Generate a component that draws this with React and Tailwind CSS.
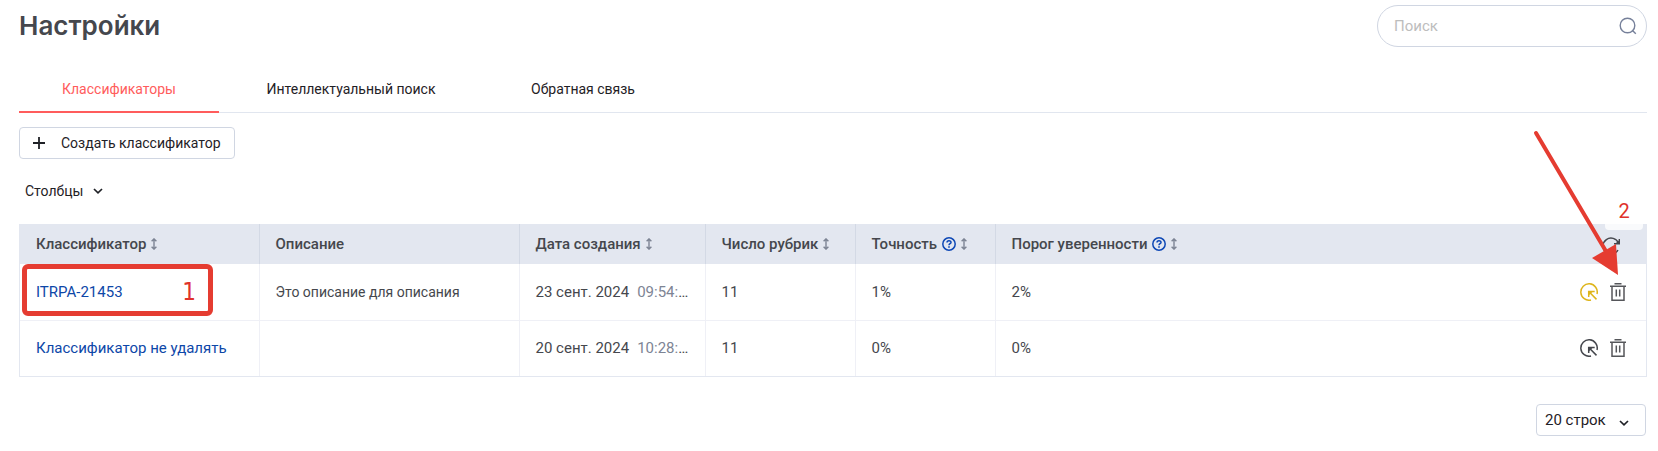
import React, { useState } from 'react';

const TABS = [
    { title: 'Классификаторы', width: 'w-[200px]' },
    { title: 'Интеллектуальный поиск', width: 'w-[264px]' },
    { title: 'Обратная связь', width: 'w-[200px]' },
];

const COLUMNS = [
    { title: 'Классификатор', width: 'w-[239px]', sortable: true },
    { title: 'Описание', width: 'w-[260px]' },
    { title: 'Дата создания', width: 'w-[186px]', sortable: true },
    { title: 'Число рубрик', width: 'w-[150px]', sortable: true },
    { title: 'Точность', width: 'w-[140px]', sortable: true, help: true },
    { title: 'Порог уверенности', width: 'w-auto', sortable: true, help: true, last: true },
];

const ROWS = [
    {
        name: 'ITRPA-21453',
        description: 'Это описание для описания',
        date: '23 сент. 2024',
        time: '09:54:',
        rubrics: 11,
        accuracy: '1%',
        threshold: '2%',
        active: true,
        mark: '1',
    },
    {
        name: 'Классификатор не удалять',
        description: '',
        date: '20 сент. 2024',
        time: '10:28:',
        rubrics: 11,
        accuracy: '0%',
        threshold: '0%',
        active: false,
    },
];

function SortIcon() {
    return (
        <svg width="6" height="12" viewBox="0 0 6 12" fill="none" stroke="#7d8494" aria-hidden="true">
            <path d="M3 1v10M.6 3.2 3 .9l2.4 2.3M.6 8.8 3 11.1l2.4-2.3" strokeWidth="1.4" />
        </svg>
    );
}

function HelpIcon() {
    return (
        <svg width="14" height="14" viewBox="0 0 14 14" fill="none" stroke="#0d47b5" aria-hidden="true">
            <circle cx="7" cy="7" r="6.2" strokeWidth="1.5" />
            <path d="M5 5.6c0-2.4 4-2.4 4-.2C9 6.8 7 6.7 7 8.2" strokeWidth="1.5" />
            <path d="M7 9.3v1.5" strokeWidth="1.6" />
        </svg>
    );
}

function SearchIcon() {
    return (
        <svg width="18" height="18" viewBox="0 0 18 18" fill="none" stroke="#76809a" strokeWidth="1.4" aria-hidden="true">
            <circle cx="8.5" cy="8.5" r="7.3" />
            <path d="m13.2 13.2 3.6 3.6" />
        </svg>
    );
}

function ChevronIcon() {
    return (
        <svg width="10" height="6" viewBox="0 0 10 6" fill="none" stroke="#1f2126" strokeWidth="1.7" aria-hidden="true">
            <path d="m1 1 4 3.8L9 1" />
        </svg>
    );
}

function PlusIcon() {
    return (
        <svg width="12" height="12" viewBox="0 0 12 12" stroke="#1f2126" strokeWidth="1.8" aria-hidden="true">
            <path d="M6 0v12M0 6h12" />
        </svg>
    );
}

function RefreshIcon() {
    return (
        <svg width="18" height="18" viewBox="0 0 18 18" fill="none" stroke="#45474d" strokeWidth="1.4" aria-hidden="true">
            <path d="M16.4 6A8 8 0 1 0 16 13" />
            <path d="M17.3 2v4.8H12" />
            <path d="m13 6.8 4.3-3.5v3.5z" fill="#45474d" stroke="none" />
        </svg>
    );
}

function TargetIcon() {
    return (
        <svg width="18" height="18" viewBox="0 0 18 18" fill="none" stroke="currentColor" strokeWidth="1.5" aria-hidden="true">
            <path d="M11 17A8.2 8.2 0 1 1 17 11" />
            <path d="m9 8.8 7.5 7.6M8.7 14V8.6h6" />
            <path d="M8.7 8.6H13l-4.3 4z" fill="currentColor" stroke="none" />
        </svg>
    );
}

function TrashIcon() {
    return (
        <svg width="16" height="18" viewBox="0 0 16 18" fill="none" stroke="#55565a" strokeWidth="1.5" aria-hidden="true">
            <path d="M0 3.3h16M4.5.8h7M2 3.3v13.9h12V3.3M6.3 6.5v7M9.7 6.5v7" />
        </svg>
    );
}

function HeaderCell({ column }) {
    return (
        <th className={`${column.width} ${column.last ? '' : 'border-r'} h-10 border-[#d3d9e5] px-4 text-left text-[15px] font-medium`}>
            <div className="flex items-center gap-[5px] whitespace-nowrap">
                <span>{column.title}</span>
                {column.help && <HelpIcon />}
                {column.sortable && <SortIcon />}
            </div>
        </th>
    );
}

function Row({ row }) {
    return (
        <tr className="h-14 border-b border-[#eff0f6] text-[15px] last:border-b-0">
            <td className="relative border-r border-[#eff0f6] px-4">
                <a href="#classifier" className="whitespace-nowrap text-[#0d47a8]">{row.name}</a>
                {row.mark && (
                    <div className="pointer-events-none absolute top-0 left-[2px] flex h-[52px] w-[191px] items-center justify-end rounded-md border-[5px] border-[#e53c31] pt-1 pr-3 font-['DejaVu_Sans_Condensed','DejaVu_Sans',sans-serif] text-2xl text-[#e0322b]">
                        {row.mark}
                    </div>
                )}
            </td>
            <td className="border-r border-[#eff0f6] px-4 text-sm">{row.description}</td>
            <td className="border-r border-[#eff0f6] px-4 whitespace-nowrap">
                {row.date}
                <span className="ml-2 text-[#7d8494]">{row.time}</span>…
            </td>
            <td className="border-r border-[#eff0f6] px-4">{row.rubrics}</td>
            <td className="border-r border-[#eff0f6] px-4">{row.accuracy}</td>
            <td className="px-4">{row.threshold}</td>
            <td className="pr-5">
                <div className="flex items-center justify-end gap-3">
                    <button type="button" aria-label="Обучить" className={row.active ? 'text-[#deb51c]' : 'text-[#45474d]'}>
                        <TargetIcon />
                    </button>
                    <button type="button" aria-label="Удалить">
                        <TrashIcon />
                    </button>
                </div>
            </td>
        </tr>
    );
}

export default function App() {
    const [tab, setTab] = useState(0);

    return (
        <main className="bg-white pt-[5px] pr-[11px] pb-4 pl-[19px] font-['Roboto',sans-serif] text-sm leading-5 text-[#45474d]">
            <header className="flex items-center justify-between">
                <h1 className="font-['Inter',sans-serif] text-[26px] font-semibold">Настройки</h1>
                <label className="flex h-[42px] w-[270px] items-center rounded-full border border-[#d0d6e2] pr-[9px] pl-4">
                    <input type="text" aria-label="Поиск" placeholder="Поиск" className="min-w-0 flex-1 text-[15px] outline-none placeholder:text-[#bdbdbd]" />
                    <SearchIcon />
                </label>
            </header>

            <nav className="mt-5 flex border-b border-[#e1e6ef]">
                {TABS.map((item, i) => (
                    <button
                        key={item.title}
                        type="button"
                        onClick={() => setTab(i)}
                        className={`${item.width} -mb-px h-[46px] border-b-2 ${i === tab ? 'border-[#ff5c5c] text-[#ff5c5c]' : 'border-transparent text-[#1f2126]'}`}
                    >
                        {item.title}
                    </button>
                ))}
            </nav>

            <button type="button" className="mt-[14px] flex h-8 items-center gap-4 rounded border border-[#d0d6e2] px-[13px] text-[#1f2126]">
                <PlusIcon />
                Создать классификатор
            </button>

            <button type="button" className="mt-[22px] ml-[6px] flex items-center gap-[10px] text-[#1f2126]">
                Столбцы
                <ChevronIcon />
            </button>

            <section className="relative mt-[23px]">
                <div className="border border-t-0 border-[#e3e7f0]">
                    <table className="w-full table-fixed border-collapse">
                        <thead className="bg-[#e3e7f0]">
                            <tr>
                                {COLUMNS.map((column) => (
                                    <HeaderCell key={column.title} column={column} />
                                ))}
                                <th className="w-[100px] pr-[26px]">
                                    <button type="button" aria-label="Обновить" className="ml-auto block pt-1">
                                        <RefreshIcon />
                                    </button>
                                </th>
                            </tr>
                        </thead>
                        <tbody>
                            {ROWS.map((row) => (
                                <Row key={row.name} row={row} />
                            ))}
                        </tbody>
                    </table>
                </div>

                {/* Подсказка: второй шаг и стрелка к корзине */}
                <div className="pointer-events-none absolute -top-8 right-1 flex h-[38px] w-[38px] items-center justify-center rounded bg-white/80 text-xl text-[#e0322b]">
                    2
                </div>
                <svg width="90" height="148" viewBox="0 0 90 148" className="pointer-events-none absolute -top-24 right-[25px]" aria-hidden="true">
                    <path d="M4 5 75 125" stroke="#e53c31" strokeWidth="4" strokeLinecap="round" />
                    <path d="m86 147-26-17 24-14z" fill="#e53c31" />
                </svg>
            </section>

            <footer className="mt-[27px] flex justify-end pr-px">
                <div className="relative">
                    <select aria-label="Строк на странице" className="h-8 w-[110px] appearance-none rounded border border-[#d0d6e2] bg-white pl-2 text-[15px] text-[#1f2126]">
                        <option>20 строк</option>
                        <option>50 строк</option>
                    </select>
                    <span className="pointer-events-none absolute right-[17px] bottom-[10px]">
                        <ChevronIcon />
                    </span>
                </div>
            </footer>
        </main>
    );
}
